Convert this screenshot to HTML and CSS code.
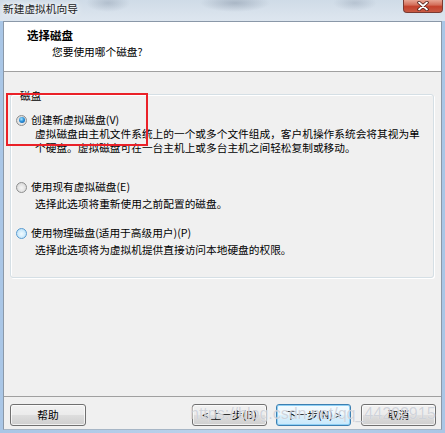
FILE: index.html
```html
<!DOCTYPE html>
<html lang="zh-CN">
<head>
<meta charset="utf-8">
<title>新建虚拟机向导</title>
<link rel="stylesheet" href="styles.css">
</head>
<body>
<div class="window">
  <div class="titlebar">
    <span class="title">新建虚拟机向导</span>
    <div class="close">
      <svg width="12" height="10" viewBox="0 0 12 10">
        <path d="M2 1.5 L10 8.5 M10 1.5 L2 8.5" stroke="#4a1a14" stroke-width="3.4" stroke-linecap="round"/>
        <path d="M2 1.5 L10 8.5 M10 1.5 L2 8.5" stroke="#ffffff" stroke-width="1.8" stroke-linecap="round"/>
      </svg>
    </div>
  </div>
  <div class="frame">
    <div class="client">
      <div class="header">
        <div class="h-title">选择磁盘</div>
        <div class="h-sub">您要使用哪个磁盘?</div>
      </div>
      <div class="body">
        <fieldset class="group">
          <legend>磁盘</legend>
          <div class="option opt1">
            <div class="opt-row"><span class="radio checked"></span><span class="opt-label">创建新虚拟磁盘(V)</span></div>
            <div class="desc">虚拟磁盘由主机文件系统上的一个或多个文件组成，客户机操作系统会将其视为单<br>个硬盘。虚拟磁盘可在一台主机上或多台主机之间轻松复制或移动。</div>
          </div>
          <div class="option opt2">
            <div class="opt-row"><span class="radio"></span><span class="opt-label">使用现有虚拟磁盘(E)</span></div>
            <div class="desc gap">选择此选项将重新使用之前配置的磁盘。</div>
          </div>
          <div class="option opt3">
            <div class="opt-row"><span class="radio hover"></span><span class="opt-label">使用物理磁盘(适用于高级用户)(P)</span></div>
            <div class="desc gap">选择此选项将为虚拟机提供直接访问本地硬盘的权限。</div>
          </div>
        </fieldset>
      </div>
      <div class="footer">
        <button class="btn">帮助</button>
        <div class="spacer"></div>
        <button class="btn back">&lt; 上一步(B)</button>
        <button class="btn next">下一步(N) &gt;</button>
        <button class="btn cancel">取消</button>
      </div>
    </div>
  </div>
  <div class="annot"></div>
  <div class="watermark">https://blog.csdn.net/qq_44202915</div>
</div>
</body>
</html>
```
FILE: styles.css
```css
* { box-sizing: border-box; }
html, body { margin: 0; padding: 0; }
body {
  width: 445px;
  height: 433px;
  overflow: hidden;
  font-family: "Noto Sans CJK SC", "Microsoft YaHei", sans-serif;
  font-size: 10.7px;
  color: #000;
  background: #b4cde8;
}
.window {
  position: relative;
  width: 445px;
  height: 433px;
  display: flex;
  flex-direction: column;
  background: linear-gradient(90deg, #a9c6e6 0%, #bcd3ec 50%, #a9c6e6 100%);
}
.titlebar {
  height: 21px;
  flex: none;
  position: relative;
  padding: 2px 0 0 3px;
  background:
    radial-gradient(ellipse 22px 9px at 108px 3px, rgba(120,135,155,0.35), rgba(120,135,155,0) 100%),
    radial-gradient(ellipse 35px 9px at 235px 3px, rgba(110,125,145,0.4), rgba(110,125,145,0) 100%),
    radial-gradient(ellipse 22px 8px at 355px 3px, rgba(120,135,155,0.3), rgba(120,135,155,0) 100%),
    linear-gradient(180deg, #cfdbe7 0%, #d8e2ec 60%, #dde6ef 100%);
}
.title {
  display: block;
  font-size: 10.7px;
  line-height: 14px;
  color: #1b1b1b;
  text-shadow: 0 0 4px #fff, 0 0 8px #fff;
}
.close {
  position: absolute;
  right: 2px;
  top: 0;
  width: 40px;
  height: 13px;
  border: 1px solid #7a3a32;
  border-top: none;
  border-radius: 0 0 4px 4px;
  background: linear-gradient(180deg, #e8a593 0%, #d4705c 40%, #c4412c 55%, #c85a44 100%);
  display: flex;
  align-items: center;
  justify-content: center;
}
.frame {
  flex: 1;
  display: flex;
  padding: 0 3px 3px 3px;
}
.client {
  flex: 1;
  display: flex;
  flex-direction: column;
  border: 1px solid #8a98a8;
  border-bottom-color: #a7b6c6;
  background: #f0f0f0;
}
.header {
  height: 50px;
  flex: none;
  background: #fff;
  border-bottom: 1px solid #a0a0a0;
  padding: 6px 0 0 23px;
}
.h-title {
  font-weight: bold;
  font-size: 11.5px;
  line-height: 14px;
}
.h-sub {
  margin-top: 3px;
  padding-left: 25px;
  line-height: 14px;
}
.body {
  flex: 1;
  padding-top: 13px;
}
.group {
  margin: 0 7px 0 6px;
  padding: 10px 0 20px 0;
  min-inline-size: 0;
  border: 1px solid #d5dfe5;
  border-radius: 3px;
  box-shadow: inset 1px 1px 0 #fff, 1px 1px 0 #fff;
}
.group legend {
  padding: 4px 1px 0 1px;
  margin-left: 8px;
  line-height: 14px;
}
.opt-row {
  display: flex;
  align-items: center;
  height: 14px;
  line-height: 14px;
}
.opt2 { margin-top: 25px; }
.opt3 { margin-top: 15px; }
.radio {
  flex: none;
  position: relative;
  width: 11px;
  height: 11px;
  margin-left: 5px;
  margin-right: 4px;
  border-radius: 50%;
  border: 1px solid #8e8f8f;
  background: radial-gradient(circle at 50% 55%, #f6f6f6 0%, #e2e2e2 55%, #cdcdcd 100%);
}
.radio.checked::after {
  content: "";
  position: absolute;
  left: 1.5px;
  top: 1.5px;
  width: 6px;
  height: 6px;
  border-radius: 50%;
  background: radial-gradient(circle at 40% 35%, #a8e6ff 0%, #2f94dc 45%, #0c4d94 100%);
}
.radio.hover {
  border-color: #5a9bd0;
  background: radial-gradient(circle at 50% 55%, #f2fbff 0%, #cdeafb 55%, #a6d6f4 100%);
}
.desc {
  padding-left: 24px;
  line-height: 14px;
}
.desc.gap { margin-top: 3px; }
.footer {
  height: 33px;
  flex: none;
  border-top: 1px solid #a0a0a0;
  display: flex;
  align-items: flex-start;
  padding: 7px 5px 0 6px;
}
.spacer { flex: 1; }
.btn {
  width: 76px;
  height: 22px;
  padding: 0;
  font-family: inherit;
  font-size: 10.7px;
  line-height: 14px;
  color: #000;
  border: 1px solid #707070;
  border-radius: 3px;
  background: linear-gradient(180deg, #f2f2f2 0%, #ebebeb 48%, #dddddd 52%, #cfcfcf 100%);
  box-shadow: inset 0 0 0 1px rgba(255,255,255,0.7);
}
.back { width: 75px; }
.next {
  width: 75px;
  margin-left: 9px;
  border-color: #3c7fb1;
  background: linear-gradient(180deg, #f4fbff 0%, #eaf6fd 48%, #d9f0fc 52%, #c8e8fb 100%);
  box-shadow: inset 0 0 0 1px #8fd0f5;
}
.cancel { width: 75px; margin-left: 10px; }
.annot {
  position: absolute;
  left: 6px;
  top: 93px;
  width: 142px;
  height: 53px;
  border: 2px solid #ea2128;
}
.watermark {
  position: absolute;
  left: 190px;
  top: 404px;
  font-family: "Liberation Sans", Arial, sans-serif;
  font-size: 16px;
  line-height: 20px;
  color: rgba(190, 195, 205, 0.7);
  text-shadow: 0 0 1px rgba(255,255,255,0.8);
  white-space: nowrap;
}
```
